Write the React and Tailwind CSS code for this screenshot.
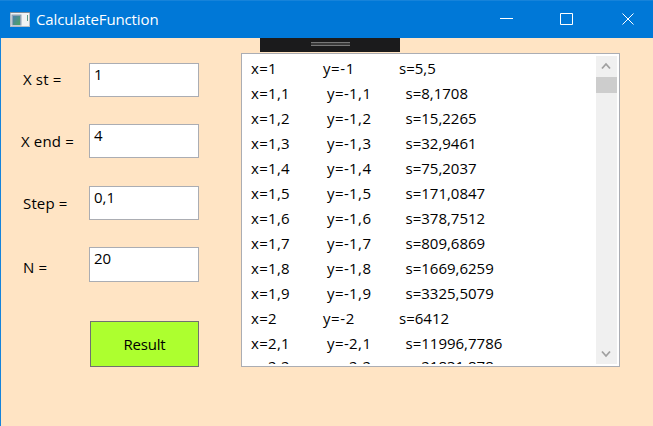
import React from "react";

const rows = [
  ["x=1", "y=-1", "s=5,5"],
  ["x=1,1", "y=-1,1", "s=8,1708"],
  ["x=1,2", "y=-1,2", "s=15,2265"],
  ["x=1,3", "y=-1,3", "s=32,9461"],
  ["x=1,4", "y=-1,4", "s=75,2037"],
  ["x=1,5", "y=-1,5", "s=171,0847"],
  ["x=1,6", "y=-1,6", "s=378,7512"],
  ["x=1,7", "y=-1,7", "s=809,6869"],
  ["x=1,8", "y=-1,8", "s=1669,6259"],
  ["x=1,9", "y=-1,9", "s=3325,5079"],
  ["x=2", "y=-2", "s=6412"],
  ["x=2,1", "y=-2,1", "s=11996,7786"],
  ["x=2,2", "y=-2,2", "s=21831,878"],
];

const fields = [
  { label: "X st =", value: "1", box: "h-[34px]", row: "mb-[27px]", text: "pl-[22px] pt-[6px]" },
  { label: "X end =", value: "4", box: "h-[34px]", row: "mb-[28px]", text: "pl-[20px] pt-[7px]" },
  { label: "Step =", value: "0,1", box: "h-[34px]", row: "mb-[27px]", text: "pl-[22px] pt-[7px]" },
  { label: "N =", value: "20", box: "h-[35px]", row: "mb-[39px]", text: "pl-[22px] pt-[10px]" },
];

function TitleBar() {
  return (
    <header className="flex h-[38px] shrink-0 items-center border-t border-[#1683da] bg-[#0078d7] pl-[10px] text-white">
      <svg width="20" height="16" viewBox="0 0 20 16" className="shrink-0">
        <defs>
          <linearGradient id="pane" x1="0" y1="0" x2="1" y2="1">
            <stop offset="0" stopColor="#4a7fb0" />
            <stop offset="1" stopColor="#4fa35e" />
          </linearGradient>
        </defs>
        <rect x="0.5" y="0.5" width="19" height="14" fill="#f0f2f4" stroke="#b4bcc4" />
        <rect x="0" y="0" width="20" height="1" fill="#7d8b97" />
        <rect x="1.500" y="2.500" width="10" height="11" fill="#8fa3b5" />
        <rect x="3" y="4" width="7" height="9" fill="url(#pane)" />
        <rect x="17" y="3" width="1" height="6" fill="#5b9a86" />
      </svg>
      <span className="-mt-0.5 ml-[6px] text-[15px] leading-5 tracking-[-0.12px]">CalculateFunction</span>
      <svg width="134" height="14" viewBox="0 0 134 14" className="-mt-0.5 ml-auto mr-[19px]" fill="none" stroke="#fff">
        <path d="M0 6.5h13" />
        <path d="M60.500 1.500h12v11h-12z" />
        <path d="M122.500 1.500l11 11m0-11l-11 11" />
      </svg>
    </header>
  );
}

function ScrollBar() {
  return (
    <div className="flex w-[21px] shrink-0 flex-col bg-[#f0f0f0]">
      <div className="flex h-[21px] items-center justify-center">
        <svg width="10" height="8" viewBox="0 0 10 8" className="-mt-px mr-px" fill="none" stroke="#a0a0a0" strokeWidth="1.800">
          <path d="M1 6.500l4-4.500l4 4.500" />
        </svg>
      </div>
      <div className="h-4 bg-[#cdcdcd]" />
      <div className="mt-auto flex h-[21px] items-center justify-center">
        <svg width="10" height="8" viewBox="0 0 10 8" className="mr-px" fill="none" stroke="#a0a0a0" strokeWidth="1.800">
          <path d="M1 1.500l4 4.500l4-4.500" />
        </svg>
      </div>
    </div>
  );
}

export default function App() {
  return (
    <div className="flex h-[426px] w-[653px] flex-col overflow-hidden bg-[#ffe4c4] font-['Open_Sans','Noto_Sans',sans-serif] text-[15px] leading-5 text-black">
      <TitleBar />
      <main className="relative flex min-h-0 flex-1 border-l border-[#1683da]">
        <section className="w-[198px] shrink-0 pt-[25px]">
          {fields.map((f) => (
            <div key={f.label} className={`flex ${f.row}`}>
              <span className={`w-[88px] shrink-0 whitespace-nowrap tracking-[0.15px] ${f.text}`}>{f.label}</span>
              <div className={`w-[110px] border border-[#abadb3] bg-white pl-1 leading-5 ${f.box}`}>
                {f.value}
              </div>
            </div>
          ))}
          <button className="ml-[89px] flex h-[46px] w-[109px] items-center justify-center border border-[#707070] bg-[#adff2f] tracking-[-0.2px]">
            Result
          </button>
        </section>
        <section className="ml-[42px] mt-[15px] flex h-[314px] w-[379px] border border-[#abadb3] bg-white p-0.5">
          <div className="min-w-0 flex-1 overflow-hidden pl-[7px]">
            <div className="-mt-px">
              {rows.map(([x, y, s]) => {
                const whole = !x.includes(",");
                return (
                  <div key={x} className="flex h-[25px] items-center whitespace-pre last:-mt-0.5">
                    <span className={whole ? "w-[72px] tracking-[0.3px]" : "w-[76px] tracking-[0.3px]"}>{x}</span>
                    <span className={whole ? "w-[76px] tracking-[0.6px]" : "w-[78.5px] tracking-[0.4px]"}>{y}</span>
                    <span>{s}</span>
                  </div>
                );
              })}
            </div>
          </div>
          <ScrollBar />
        </section>
        <div className="absolute left-[259px] top-0 flex h-[14px] w-[140px] justify-center bg-[#1b1b1c] pt-1">
          <div className="h-1 w-[39px] border-y border-[#777] bg-[#3a3a3a]" />
        </div>
      </main>
    </div>
  );
}
